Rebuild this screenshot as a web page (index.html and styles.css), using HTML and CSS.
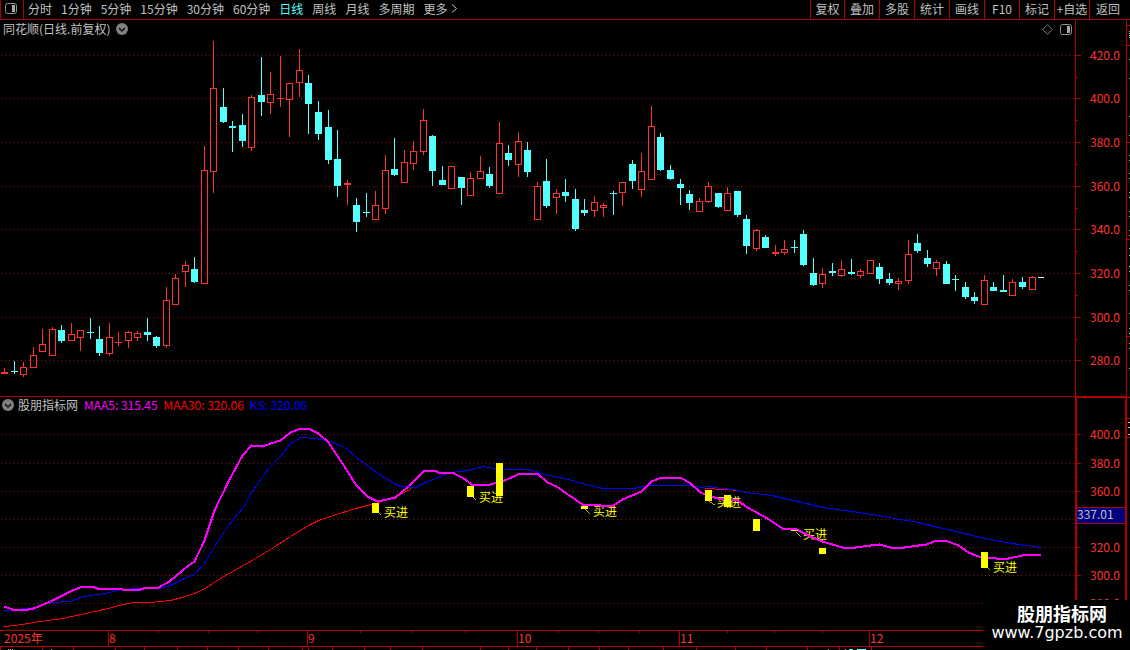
FILE: index.html
```html
<!DOCTYPE html>
<html lang="zh-CN">
<head>
<meta charset="utf-8">
<title>同花顺 日线</title>
<link rel="stylesheet" href="styles.css">
</head>
<body>
<div class="app">
  <header class="toolbar">
    <button class="icon-btn layout-btn" type="button" aria-label="布局">
      <svg width="12" height="11" viewBox="0 0 12 11"><rect x="0.5" y="0.5" width="11" height="10" rx="2" fill="none" stroke="#909090"/><rect x="7" y="2" width="3" height="7" fill="#a8a8a8"/></svg>
    </button>
    <nav class="periods">
      <button type="button">分时</button>
      <button type="button">1分钟</button>
      <button type="button">5分钟</button>
      <button type="button">15分钟</button>
      <button type="button">30分钟</button>
      <button type="button">60分钟</button>
      <button type="button" class="active">日线</button>
      <button type="button">周线</button>
      <button type="button">月线</button>
      <button type="button">多周期</button>
      <button type="button" class="more">更多
        <svg width="7" height="9" viewBox="0 0 7 9"><path d="M1 0.5L5.5 4.5L1 8.5" fill="none" stroke="#c0c0c0"/></svg>
      </button>
    </nav>
    <div class="tools">
      <button type="button">复权</button>
      <button type="button">叠加</button>
      <button type="button">多股</button>
      <button type="button">统计</button>
      <button type="button">画线</button>
      <button type="button">F10</button>
      <button type="button">标记</button>
      <button type="button">+自选</button>
      <button type="button">返回</button>
    </div>
  </header>

  <main class="board">
    <section class="panel">
      <div class="panel-head">
        <span>同花顺(日线.前复权)</span>
        <button class="icon-btn" type="button" aria-label="展开">
          <svg width="12" height="12" viewBox="0 0 12 12"><circle cx="6" cy="6" r="6" fill="#808080"/><path d="M3 5L6 8L9 5" fill="none" stroke="#101010" stroke-width="1.5"/></svg>
        </button>
        <span class="head-icons">
          <svg width="11" height="11" viewBox="0 0 11 11"><path d="M5.5 0.7L10.3 5.5L5.5 10.3L0.7 5.5Z" fill="none" stroke="#808080"/></svg>
          <svg width="12" height="11" viewBox="0 0 12 11"><rect x="0.5" y="0.5" width="11" height="10" rx="2" fill="none" stroke="#909090"/><rect x="7" y="2" width="3" height="7" fill="#a8a8a8"/></svg>
        </span>
      </div>
      <svg class="plot" id="price"></svg>
    </section>
    <svg class="axis" id="price-axis"></svg>

    <section class="panel panel-lower">
      <div class="panel-head indicator-head">
        <button class="icon-btn" type="button" aria-label="指标">
          <svg width="12" height="12" viewBox="0 0 12 12"><circle cx="6" cy="6" r="6" fill="#808080"/><path d="M3 5L6 8L9 5" fill="none" stroke="#101010" stroke-width="1.5"/></svg>
        </button>
        <span>股朋指标网</span>
        <span class="maa5">MAA5: 315.45</span>
        <span class="maa30">MAA30: 320.06</span>
        <span class="ks">KS: 320.06</span>
      </div>
      <svg class="plot" id="signal"></svg>
    </section>
    <svg class="axis" id="signal-axis"></svg>

    <svg class="dates" id="dates"></svg>
    <svg class="ruler" id="ruler"></svg>
    <svg class="side" id="side"></svg>
  </main>

  <div class="badge">
    <strong>股朋指标网</strong>
    <span>www.7gpzb.com</span>
  </div>
</div>
<script src="chart.js"></script>
</body>
</html>
```
FILE: styles.css
```css
* {
  box-sizing: border-box;
}

body {
  margin: 0;
  background: #000;
  color: #c0c0c0;
  font-family: "Noto Sans CJK SC", "Liberation Sans", sans-serif;
  font-size: 12px;
  line-height: 18px;
}

button {
  margin: 0;
  padding: 0;
  border: 0;
  background: none;
  color: inherit;
  font: inherit;
  white-space: nowrap;
  cursor: pointer;
}

svg {
  display: block;
}

.app {
  position: relative;
  display: flex;
  flex-direction: column;
  height: 100vh;
  overflow: hidden;
}

.toolbar {
  display: flex;
  height: 20px;
  padding-right: 4px;
  border-bottom: 1px solid #b00000;
  border-left: 1px solid #b00000;
}

.icon-btn {
  display: flex;
  align-items: center;
  justify-content: center;
}

.layout-btn {
  width: 23px;
  padding-right: 2px;
  padding-bottom: 2px;
  border-right: 1px solid #b00000;
}

.periods {
  display: flex;
  flex: 1;
  gap: 9px;
  padding-left: 4px;
}

.periods button,
.tools button {
  padding-bottom: 2px;
}

.periods .active {
  color: #54ffff;
}

.more {
  display: flex;
  align-items: center;
  gap: 4px;
}

.tools {
  display: flex;
}

.tools button {
  width: 35px;
  border-left: 1px solid #b00000;
}

.tools button:first-child {
  width: 34px;
}

.tools button:last-child {
  width: 37px;
}

.board {
  display: grid;
  flex: 1;
  min-height: 0;
  grid-template-columns: minmax(0, 1fr) 51px 4px;
  grid-template-rows: minmax(0, 376fr) minmax(0, 234fr) 16px 4px;
}

.panel {
  display: flex;
  flex-direction: column;
  min-height: 0;
}

.panel-lower {
  border-top: 1px solid #b00000;
}

.panel-head {
  display: flex;
  align-items: center;
  gap: 6px;
  height: 20px;
  padding: 0 3px 2px;
}

.indicator-head {
  padding: 0 2px 4px;
}

.indicator-head .icon-btn {
  margin-right: -2px;
}

.head-icons {
  display: flex;
  gap: 7px;
  margin-left: auto;
}

.maa5 {
  color: #ff00ff;
}

.maa30 {
  color: #ff0000;
}

.ks {
  color: #0000ff;
}

.plot {
  flex: 1;
  width: 100%;
  min-height: 0;
}

.axis,
.dates,
.ruler,
.side {
  width: 100%;
  height: 100%;
}

.dates,
.ruler {
  grid-column: 1 / 3;
}

.dates {
  grid-row: 3;
}

.ruler {
  grid-row: 4;
}

.side {
  grid-column: 3;
  grid-row: 1 / 5;
}

svg text {
  font-family: "Noto Sans CJK SC", "Liberation Sans", sans-serif;
  font-size: 12px;
}

.badge {
  position: absolute;
  right: 0;
  bottom: 0;
  display: flex;
  flex-direction: column;
  align-items: center;
  width: 146px;
  height: 50px;
  padding-top: 3px;
  background: #000;
  color: #fff;
}

.badge strong {
  padding-left: 10px;
  font-size: 18px;
  font-weight: 700;
  line-height: 20px;
}

.badge span {
  font-family: "DejaVu Sans", sans-serif;
  font-size: 16px;
  line-height: 20px;
}
```
FILE: chart.js
```js
const NS = "http://www.w3.org/2000/svg";
const RED = "#ff3232", CYAN = "#54ffff", LINE = "#b00000", GRID = "#961010";

// Creates a drawing surface whose units stretch with the element.
function surface(id, left, top, width, height) {
  const svg = document.getElementById(id);
  const box = svg.getBoundingClientRect();
  svg.replaceChildren();
  const kx = box.width / width, ky = box.height / height;
  const X = x => (x - left) * kx, Y = y => (y - top) * ky;
  function add(name, attrs, text) {
    const el = document.createElementNS(NS, name);
    for (const key in attrs) el.setAttribute(key, attrs[key]);
    if (text) el.textContent = text;
    svg.append(el);
  }
  return {
    rect(x, y, w, h, fill) {
      add("rect", { x: X(x), y: Y(y), width: w * kx, height: h * ky, fill, "shape-rendering": "crispEdges" });
    },
    frame(x, y, w, h, stroke) {
      add("rect", { x: X(x + 0.5), y: Y(y + 0.5), width: (w - 1) * kx, height: (h - 1) * ky, fill: "none", stroke, "shape-rendering": "crispEdges" });
    },
    dots(y) {
      add("line", { x1: X(1), x2: X(1075), y1: Y(y + 0.5), y2: Y(y + 0.5), stroke: GRID, "stroke-dasharray": "1 3", "shape-rendering": "crispEdges" });
    },
    line(data, stroke, width) {
      const n = data.trim().split(/\s+/).map(p => p.split(",").map(Number));
      add("polyline", { points: n.map(p => X(p[0] + 0.5) + "," + Y(p[1] + 0.5)).join(" "), fill: "none", stroke, "stroke-width": width, "shape-rendering": "crispEdges" });
    },
    text(x, y, value, fill) {
      add("text", { x: X(x), y: Y(y), fill }, value);
    }
  };
}

// type, left, high, body top, body bottom, low
const candles = `
r 1 368 372 374 374|c 11 361 371 372 374|r 20 362 367 375 377|r 30 347 355 368 368|r 39 329 344 352 352
r 49 327 329 356 356|c 58 325 330 341 343|r 68 323 334 341 341|r 77 330 330 338 351|c 87 318 332 333 339
c 96 326 339 353 356|r 106 323 337 354 356|r 115 332 342 343 346|r 125 331 332 341 348|r 134 331 333 338 341
c 144 318 332 335 341|c 153 336 337 346 348|r 163 287 300 346 348|r 172 274 278 305 305|r 182 261 265 272 287
c 191 257 269 282 283|r 201 146 170 284 284|r 210 41 88 172 193|c 220 88 107 122 123|c 229 121 126 128 152
c 239 114 125 141 147|r 248 95 97 148 151|c 258 57 95 102 116|r 267 72 94 103 114|r 277 56 98 99 107
r 286 83 83 100 137|r 296 49 70 83 97|c 305 75 83 104 134|c 315 101 112 134 140|c 325 110 127 160 164
c 334 130 159 186 197|r 344 180 183 185 205|c 353 198 205 222 232|c 363 193 212 213 217|r 372 191 205 220 220
r 382 155 170 209 214|c 391 138 169 175 176|r 401 150 162 183 183|r 410 141 151 164 170|r 420 109 120 152 155
c 429 135 136 171 186|c 439 166 180 185 185|r 448 166 166 189 189|c 458 177 177 188 205|r 467 172 178 196 196
r 477 156 171 179 179|c 486 167 174 186 188|r 496 122 143 194 194|c 505 145 153 160 166|r 515 132 141 165 177
c 524 142 150 172 177|r 534 182 186 220 220|c 543 159 181 206 208|r 553 189 193 198 214|c 562 179 192 196 202
c 572 189 199 229 231|c 581 199 210 213 216|r 591 196 202 211 217|r 600 203 205 208 217|c 610 191 193 194 215
r 619 182 182 193 206|c 629 160 164 181 189|r 638 153 171 190 197|r 648 106 126 180 180|c 657 133 137 170 171
c 667 165 170 179 180|c 677 179 184 188 205|c 686 190 194 203 210|r 696 198 201 212 212|r 705 182 186 202 203
c 715 193 193 207 208|r 724 187 193 211 211|c 734 191 191 215 217|c 743 215 219 246 254|r 753 229 230 249 251
c 762 235 237 248 248|r 772 245 252 254 256|r 781 240 249 253 255|c 791 240 247 248 253|c 800 230 234 265 266
c 810 258 273 285 286|r 819 268 274 284 288|c 829 263 271 273 276|r 838 260 269 276 277|c 848 259 272 274 275
r 857 269 271 276 278|r 867 260 260 274 274|c 876 263 267 279 284|c 886 273 279 283 285|r 895 278 281 284 290
r 905 240 254 281 284|c 914 234 243 251 253|c 924 250 258 264 267|r 933 260 262 269 276|c 943 261 264 284 284
c 952 275 279 280 291|c 962 282 287 297 299|c 971 292 297 301 304|r 981 275 280 305 305|c 990 282 287 291 291
c 1000 275 290 292 292|r 1009 279 282 296 296|c 1019 277 282 287 289|r 1029 276 277 290 290`
  .trim().split(/[|\n]/).map(s => s.split(" "));

const priceLevels = { 420: 55, 400: 98, 380: 142, 360: 186, 340: 229, 320: 273, 300: 317, 280: 360 };
const signalLevels = { 400: 434, 380: 463, 360: 491, 340: 519, 320: 547, 300: 575, 280: 603 };

const maa5 = `4,606 12,609 28,609 33,608 50,601 72,590 82,586 91,586 97,588 118,588 122,589 140,589 146,587 158,587
169,581 188,565 194,561 204,540 214,510 228,481 242,455 251,445 262,446 270,443 280,440 290,432 300,428 308,428
318,433 328,442 342,463 356,485 367,496 375,500 382,500 395,497 408,486 424,470 434,470 438,472 452,472 465,479
471,484 490,484 504,480 520,473 537,473 547,482 556,486 569,495 582,504 595,504 600,505 613,505 622,499 641,491
651,481 661,477 680,477 690,483 700,492 708,495 717,498 727,499 737,500 747,507 767,518 782,528 794,528 810,536
822,541 842,547 855,547 870,545 879,544 890,547 904,547 918,545 926,544 936,540 945,540 958,545 968,552 978,556
996,558 1008,558 1022,555 1041,554`;
const ks = `4,610 28,608 38,606 50,602 70,601 83,596 105,593 120,589 140,588 158,588 170,585 184,578 194,574 204,563
214,546 228,525 243,507 251,492 268,468 280,456 290,443 301,437 315,438 330,441 346,448 356,457 376,472 395,484
407,487 415,487 425,482 450,472 468,470 482,466 494,468 504,469 528,469 545,474 568,479 585,484 602,488 632,488
650,485 685,485 695,486 702,487 708,486 720,488 734,489 745,492 772,495 792,500 806,503 822,507 852,511 878,515
900,519 918,522 938,527 960,532 980,537 1000,541 1018,544 1041,547`;
const maa30 = `4,626 22,624 40,621 62,618 85,613 108,608 118,605 133,602 150,602 170,600 182,597 194,593 205,588
215,581 232,571 250,561 270,549 290,536 308,525 318,520 330,516 355,508 375,503 398,495 411,488`;

function draw() {
  const p = surface("price", 0, 40, 1075, 356);
  Object.values(priceLevels).forEach(y => p.dots(y));
  for (const [type, ...v] of candles) {
    const [x, high, top, bottom, low] = v.map(Number);
    const color = type === "c" ? CYAN : RED;
    if (top > high) p.rect(x + 3, high, 1, top - high, color);
    if (low > bottom) p.rect(x + 3, bottom, 1, low - bottom, color);
    if (type === "r" && bottom - top > 2) p.frame(x, top, 7, bottom - top, color);
    else p.rect(x, top, 7, bottom - top, color);
  }
  p.rect(1038, 277, 6, 1, "#fff");

  const a = surface("price-axis", 1075, 20, 51, 376);
  a.rect(1075, 20, 1, 376, LINE);
  for (const level in priceLevels) {
    const y = priceLevels[level];
    a.rect(1076, y, 5, 1, LINE);
    if (level > 280) a.rect(1076, y + 22, 2, 1, LINE);
    a.text(1090, y + 5, level + ".0", RED);
  }

  const s = surface("signal", 0, 417, 1075, 213);
  Object.values(signalLevels).forEach(y => s.dots(y));
  s.line(maa30, "#ff0000", 1);
  s.line("704,488 714,488", "#ff0000", 1);
  s.line("714,489 730,489", "#ff0000", 1);
  s.line("732,490 735,490", "#ff0000", 1);
  for (const [x, y] of [[384, 517], [479, 502], [593, 516], [717, 507], [803, 539], [993, 572]])
    s.text(x, y, "买进", "#ffff00");
  for (const l of ["378,512 381,515", "473,497 476,500", "585,509 590,514", "709,501 715,505", "796,532 801,537", "987,567 990,570"])
    s.line(l, "#b4b400", 1);
  s.line(ks, "#0000ff", 1);
  s.line(maa5, "#ff00ff", 2);
  for (const [x, y, h] of [[372, 503, 10], [467, 486, 11], [496, 463, 33], [581, 506, 3], [705, 490, 11], [724, 495, 12], [753, 519, 12], [819, 548, 6], [981, 552, 16]])
    s.rect(x, y, 7, h, "#ffff00");
  s.rect(791, 530, 7, 1, "#ffff00");

  const b = surface("signal-axis", 1075, 396, 51, 234);
  b.rect(1075, 396, 51, 2, LINE);
  b.rect(1075, 396, 2, 234, LINE);
  b.rect(1125, 396, 1, 234, LINE);
  for (const level in signalLevels) {
    const y = signalLevels[level];
    b.rect(1077, y, 4, 1, LINE);
    b.rect(1077, y + 14, 1, 1, LINE);
    if (level !== "340") b.text(1090, y + 5, level + ".0", RED);
  }
  b.rect(1077, 507, 48, 17, LINE);
  b.rect(1077, 508, 48, 15, "#000080");
  b.text(1077, 519, "337.01", "#c0c0c0");

  const d = surface("dates", 0, 630, 1126, 16);
  d.rect(0, 630, 1126, 1, LINE);
  [158, 208, 257, 360, 412, 465, 558, 598, 639, 727, 774, 822].forEach(x => d.rect(x, 631, 1, 2, LINE));
  d.text(4, 643, "2025年", RED);
  for (const [x, m] of [[108, "8"], [307, "9"], [517, "10"], [679, "11"], [869, "12"]]) {
    d.rect(x, 631, 1, 15, LINE);
    d.text(x + 1, 643, m, RED);
  }

  const r = surface("ruler", 0, 646, 1126, 4);
  r.rect(0, 646, 1126, 1, LINE);
  [0, 42, 73, 115, 144, 177, 207, 238, 268, 302, 308, 332, 364, 390, 422, 480, 508, 536, 568, 599, 628, 663, 696, 735, 766, 807, 839, 871].forEach(x => r.rect(x, 647, 1, 3, LINE));
  [8, 10, 12, 51, 828, 845].forEach(x => r.rect(x, 649, 1, 1, "#c0c0c0"));
  r.rect(849, 649, 4, 1, CYAN);
  r.rect(857, 649, 9, 1, CYAN);

  const e = surface("side", 1126, 20, 4, 630);
  e.rect(1126, 20, 1, 630, LINE);
  [25, 45, 142, 239, 336, 397, 418, 437].forEach(y => e.rect(1127, y, 3, 1, LINE));
  [31, 33, 35, 37, 59, 78, 116, 135, 155, 160, 173, 178, 192, 197, 211, 216, 230, 235, 248, 255, 266, 271, 285, 290, 313, 328, 333, 343, 348, 368].forEach(y => e.rect(1129, y, 1, 1, "#c0c0c0"));
  [422, 427, 434].forEach(y => e.rect(1128, y, 2, 1, "#c0c0c0"));
}

draw();
window.addEventListener("resize", draw);
```
